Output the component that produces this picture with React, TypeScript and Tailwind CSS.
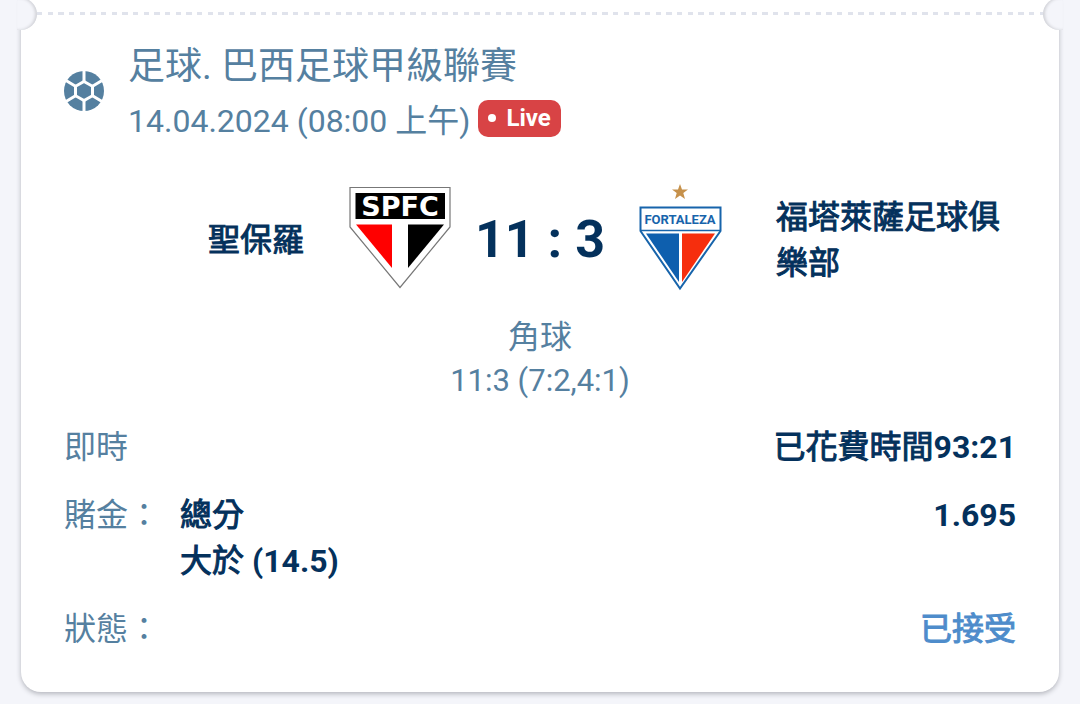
import React from "react";

const SoccerIcon = () => (
  <svg viewBox="0 0 40 40" className="mb-1 size-10 shrink-0" aria-hidden="true">
    <circle cx="20" cy="20" r="20" fill="#5580a0" />
    <path
      d="M20 10.5 28.5 15.3V24.7L20 29.5 11.5 24.7V15.3Z"
      fill="#5580a0"
      stroke="#fff"
      strokeWidth="3"
    />
    <path
      d="M20 10.5V-1M28.5 15.3 38 9.5M28.5 24.7 38 30.5M20 29.5V41M11.5 24.7 2 30.5M11.5 15.3 2 9.5"
      stroke="#fff"
      strokeWidth="3"
    />
  </svg>
);

const SaoPauloLogo = () => (
  <svg viewBox="0 0 104 112" className="h-28 w-[104px] shrink-0" role="img" aria-label="SPFC">
    <path d="M2 3.5H102V43L52 103.5 2 43Z" fill="#fff" stroke="#777" strokeWidth="1.2" />
    <rect x="7.5" y="9" width="89.5" height="26" fill="#000" />
    <path d="M8 40.5H44V84Z" fill="#f00" />
    <path d="M60 40.5H96L60 84Z" fill="#000" />
    <text
      x="52"
      y="32"
      textAnchor="middle"
      fill="#fff"
      fontFamily="DejaVu Sans, sans-serif"
      fontWeight="700"
      fontSize="27"
    >
      SPFC
    </text>
  </svg>
);

const FortalezaLogo = () => (
  <svg viewBox="0 0 104 112" className="h-28 w-[104px] shrink-0" role="img" aria-label="Fortaleza">
    <path d="M52 0 54 5.5H60L55.3 9 57 15 52 11.5 47 15 48.7 9 44 5.5H50Z" fill="#c6914b" />
    <path d="M12.5 23.5H92.5V47L52 104.5 12.5 47Z" fill="#fff" stroke="#1764ab" strokeWidth="2" />
    <path d="M12.5 46.5H92.5" stroke="#1764ab" strokeWidth="1.5" />
    <path d="M18 49.5H51V98Z" fill="#0e5fae" />
    <path d="M54 49.5H87L54 98Z" fill="#f62e0d" />
    <text
      x="52"
      y="40"
      textAnchor="middle"
      fill="#1764ab"
      fontFamily="Roboto, sans-serif"
      fontWeight="700"
      fontSize="13"
    >
      FORTALEZA
    </text>
  </svg>
);

const Perforation = () => (
  <>
    <div className="absolute -top-[2px] -left-1 h-8 w-5 rounded-r-full bg-[#f4f5fa] shadow-[inset_-2px_0_3px_#d2d3d8]" />
    <div className="absolute -top-[2px] -right-1 h-8 w-5 rounded-l-full bg-[#f4f5fa] shadow-[inset_2px_0_3px_#d2d3d8]" />
    <div className="mx-4 h-[3px] bg-[repeating-linear-gradient(90deg,#e0e3ec_0_5px,transparent_5px_11px,#e0e3ec_11px_16px,transparent_16px_21px,#e0e3ec_21px_27px,transparent_27px_32px)]" />
  </>
);

// Semi-bold Chinese: regular glyphs thickened with a stroke
const Strong = ({ children }: { children: React.ReactNode }) => (
  <span className="font-normal [-webkit-text-stroke:1px_currentColor]">{children}</span>
);

const BetRow = ({ label, children }: { label: string; children: React.ReactNode }) => (
  <div className="flex leading-[46px]">
    <dt className="w-[116px] shrink-0">{label}</dt>
    <dd className="flex grow justify-between font-bold text-[#04315c]">{children}</dd>
  </div>
);

const App = () => (
  <main className="min-h-screen bg-[#f4f5fa] px-[21px] pb-3 font-[Roboto,'Noto_Sans_CJK_TC',sans-serif] text-[32px] text-[#5580a0]">
    <article className="relative rounded-b-[20px] bg-white pt-3 pb-10 shadow-[0_2px_5px_#b4b6bd]">
      <Perforation />
      <div className="px-[43px] pt-6">
        <header className="flex items-center gap-6">
          <SoccerIcon />
          <div>
            <h1 className="text-[37px] leading-[56px]">足球. 巴西足球甲級聯賽</h1>
            <div className="flex items-center gap-2 leading-[52px]">
              <time dateTime="2024-04-14T08:00">14.04.2024 (08:00 上午)</time>
              <span className="mb-1.5 flex h-[37px] items-center gap-2.5 rounded-[10px] bg-[#d84345] px-2.5 text-2xl font-bold text-white">
                <span className="size-2 rounded-full bg-white" />
                Live
              </span>
            </div>
          </div>
        </header>

        <section className="mt-[37px] flex items-center leading-[46px] font-bold text-[#04315c]">
          <h2 className="flex-1 text-right">
            <Strong>聖保羅</Strong>
          </h2>
          <div className="mx-11 flex items-center">
            <SaoPauloLogo />
            <p className="w-44 text-center text-[52px]">11 : 3</p>
            <FortalezaLogo />
          </div>
          <h2 className="flex-1">
            <Strong>福塔萊薩足球俱樂部</Strong>
          </h2>
        </section>

        <section className="mt-[19px] text-center leading-[44px]">
          <h3>角球</h3>
          <p className="text-[31px]">11:3 (7:2,4:1)</p>
        </section>

        <dl className="mt-[21px] space-y-[22px]">
          <BetRow label="即時">
            <span className="ml-auto">
              <Strong>已花費時間</Strong>93:21
            </span>
          </BetRow>
          <BetRow label="賭金：">
            <span>
              <Strong>總分</Strong>
              <br />
              <Strong>大於</Strong> (14.5)
            </span>
            <span>1.695</span>
          </BetRow>
          <BetRow label="狀態：">
            <span className="ml-auto text-[#4e8ccb]">
              <Strong>已接受</Strong>
            </span>
          </BetRow>
        </dl>
      </div>
    </article>
  </main>
);

export default App;
